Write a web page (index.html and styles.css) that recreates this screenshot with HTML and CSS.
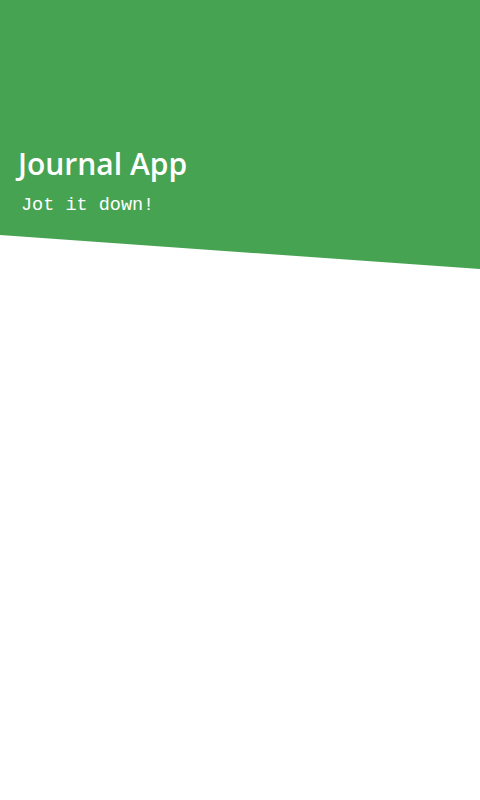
FILE: index.html
```html
<!DOCTYPE html>
<html>
<head>
<meta charset="utf-8">
<link rel="stylesheet" href="styles.css">
</head>
<body>
<header class="hero">
  <h1 class="title">Journal App</h1>
  <p class="subtitle">Jot it down!</p>
</header>
</body>
</html>
```
FILE: styles.css
```css
html, body { margin: 0; padding: 0; background: #fff; }
.hero {
  background: #46a352;
  height: 270px;
  clip-path: polygon(0 0, 100% 0, 100% 269px, 0 235px);
  padding: 144px 0 0 18px;
  box-sizing: border-box;
}
.title {
  margin: 0;
  font-family: "Open Sans", sans-serif;
  font-weight: 600;
  font-size: 30px;
  line-height: 40px;
  color: #fff;
}
.subtitle {
  margin: 12px 0 0 3px;
  font-family: "Liberation Mono", "Courier New", monospace;
  font-size: 18.5px;
  line-height: 20px;
  color: #fff;
}
```
